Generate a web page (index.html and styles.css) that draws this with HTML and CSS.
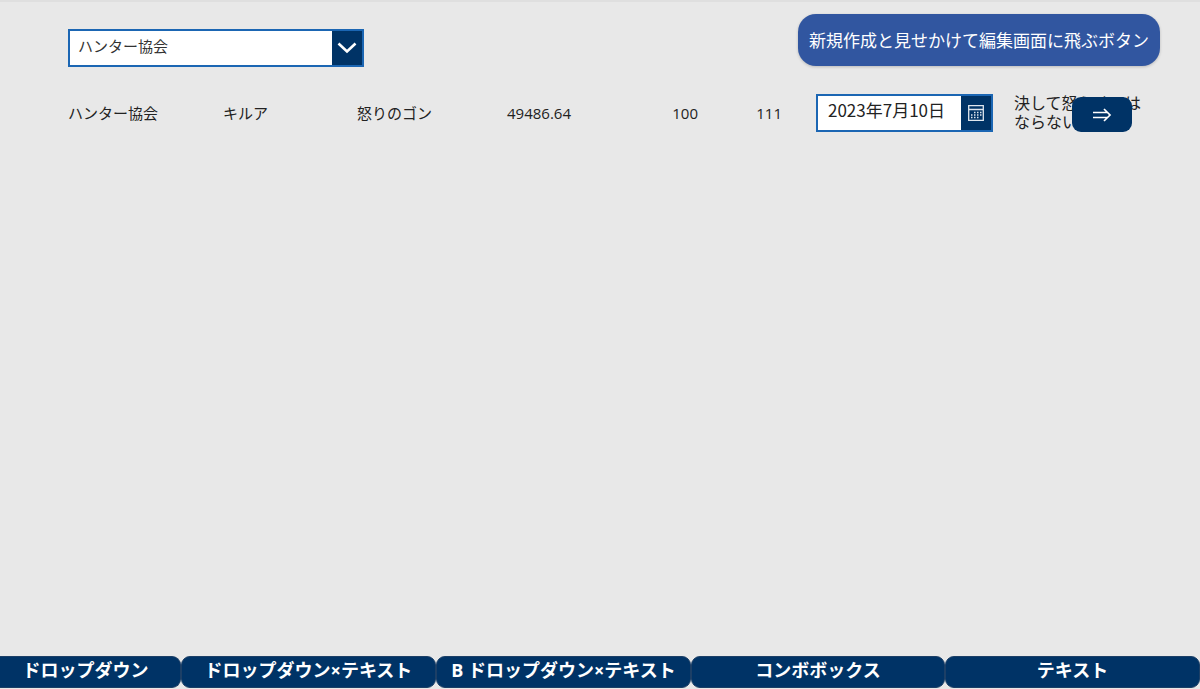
FILE: index.html
```html
<!DOCTYPE html>
<html lang="ja">
<head>
<meta charset="utf-8">
<title>ハンター協会</title>
<link rel="stylesheet" href="styles.css">
</head>
<body>
<header class="toolbar">
  <div class="dropdown">
    <select class="dropdown-select" aria-label="所属">
      <option>ハンター協会</option>
    </select>
    <span class="dropdown-arrow" aria-hidden="true">
      <svg width="20" height="12" viewBox="0 0 20 12"><path d="M1.5 1.5 10 9.5 18.500 1.500" fill="none" stroke="#fff" stroke-width="2.600"/></svg>
    </span>
  </div>
  <button class="create-button" type="button">新規作成と見せかけて編集画面に飛ぶボタン</button>
</header>
<main class="gallery">
  <div class="record">
    <span>ハンター協会</span>
    <span>キルア</span>
    <span>怒りのゴン</span>
    <span>49486.64</span>
    <span class="number">100</span>
    <span class="number">111</span>
    <div class="date-picker">
      <input class="date-input" type="text" value="2023年7月10日" aria-label="日付">
      <button class="date-button" type="button" aria-label="カレンダーを開く">
        <svg width="16" height="16" viewBox="0 0 16 16" fill="none" stroke="#dfe6ee">
          <path d="M.7.7H15.300V15.300H.7ZM.7 4.500H15.300" stroke-width="1.300"/>
          <path d="M6 7.500h1.500M9 7.500h1.500M12 7.500h1.500M3 10h1.500M6 10h1.500M9 10h1.500M12 10h1.500M3 12.500h1.500M6 12.500h1.500M9 12.500h1.500" stroke-width="1.400"/>
        </svg>
      </button>
    </div>
    <div class="note">
      <span>決して怒らせてはならない</span>
      <button class="open-button" type="button" aria-label="編集画面へ">
        <svg width="20" height="14" viewBox="0 0 20 14" fill="none" stroke="#fff" stroke-width="1.700"><path d="M1 4.500H15.500M1 9.500H15.500M12 1 18 7 12 13"/></svg>
      </button>
    </div>
  </div>
</main>
<nav class="tabs">
  <button class="tab tab-first" type="button">ドロップダウン</button>
  <button class="tab" type="button">ドロップダウン×テキスト</button>
  <button class="tab" type="button">B ドロップダウン×テキスト</button>
  <button class="tab" type="button">コンボボックス</button>
  <button class="tab" type="button">テキスト</button>
</nav>
</body>
</html>
```

FILE: styles.css
```css
* {
  box-sizing: border-box;
}

body {
  margin: 0;
  min-height: 100vh;
  display: flex;
  flex-direction: column;
  border-top: 2px solid #dfdfdf;
  background: #e8e8e8;
  color: #222;
  font: 15px/19px "Open Sans", "Noto Sans CJK JP", sans-serif;
}

button,
select,
input {
  margin: 0;
  border: 0;
  font: inherit;
}

button {
  cursor: pointer;
}

.toolbar {
  display: flex;
  justify-content: space-between;
  align-items: center;
  padding: 11px 40px 0 68px;
}

.dropdown {
  position: relative;
  width: 296px;
  margin-top: 16px;
}

.dropdown-select {
  appearance: none;
  display: block;
  width: 100%;
  height: 38px;
  padding: 0 40px 4px 8px;
  border: 2px solid #1b66b3;
  border-radius: 0;
  background: #fff;
  color: #333;
}

.dropdown-arrow {
  position: absolute;
  top: 2px;
  right: 2px;
  bottom: 2px;
  width: 30px;
  display: grid;
  place-items: center;
  background: #036;
  pointer-events: none;
}

.create-button {
  height: 52px;
  padding: 0 11px;
  border-radius: 18px;
  background: #3156a0;
  box-shadow: 0 1px 3px #0003;
  color: #fff;
  font-size: 17px;
}

.gallery {
  flex: 1;
  padding: 27px 56px 0 68px;
}

.record {
  display: grid;
  grid-template-columns: 155fr 134fr 150fr 90fr 101fr 84fr 211fr 151fr;
  align-items: center;
}

.number {
  text-align: right;
}

.date-picker {
  display: flex;
  min-width: 0;
  height: 38px;
  margin-left: 34px;
  border: 2px solid #1b66b3;
  background: #fff;
}

.date-input {
  flex: 1;
  min-width: 0;
  padding: 0 0 8px 10px;
  background: transparent;
  color: #222;
  font-family: "Noto Sans CJK JP", sans-serif;
  font-size: 17px;
}

.date-button {
  width: 30px;
  padding: 0;
  display: grid;
  place-items: center;
  background: #036;
}

.note {
  position: relative;
  padding-left: 21px;
  font-size: 16px;
}

.open-button {
  position: absolute;
  top: 3px;
  right: 12px;
  width: 60px;
  height: 35px;
  display: grid;
  place-items: center;
  border-radius: 9px;
  background: #036;
}

.tabs {
  display: grid;
  grid-template-columns: 181fr 255fr 255fr 254fr 255fr;
  padding-bottom: 1px;
}

.tab {
  height: 32px;
  padding: 0 0 4px;
  border: 1px solid #1c3f66;
  border-radius: 9px;
  background: #036;
  color: #fff;
  font-size: 18px;
  font-weight: 700;
  white-space: nowrap;
}

.tab-first {
  padding-right: 9px;
  border-left: 0;
  border-radius: 0 9px 9px 0;
}
```
